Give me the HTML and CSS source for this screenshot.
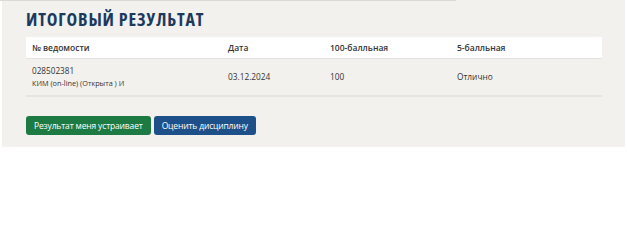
FILE: index.html
```html
<!DOCTYPE html>
<html lang="ru">
<head>
<meta charset="utf-8">
<link rel="stylesheet" href="styles.css">
</head>
<body>
<div class="topline"></div>
<section class="panel">
  <h2 class="title">ИТОГОВЫЙ РЕЗУЛЬТАТ</h2>
  <table class="results">
    <thead>
      <tr>
        <th class="c1">№ ведомости</th>
        <th class="c2">Дата</th>
        <th class="c3">100-балльная</th>
        <th class="c4">5-балльная</th>
      </tr>
    </thead>
    <tbody>
      <tr>
        <td class="c1"><div class="num">028502381</div><div class="sub">КИМ (on-line) (Открыта ) И</div></td>
        <td class="c2">03.12.2024</td>
        <td class="c3">100</td>
        <td class="c4">Отлично</td>
      </tr>
    </tbody>
  </table>
  <div class="actions">
    <button class="btn btn-green">Результат меня устраивает</button>
    <button class="btn btn-blue">Оценить дисциплину</button>
  </div>
</section>
</body>
</html>
```
FILE: styles.css
```css
html, body { margin: 0; padding: 0; background: #fff; }
body { font-family: "Open Sans", "Noto Sans", sans-serif; color: #333; position: relative; }
.topline { position: absolute; left: 0; top: 0; width: 456px; height: 1px; background: #dcdad6; }
.panel {
  margin-left: 2px;
  width: 623px;
  height: 147px;
  box-sizing: border-box;
  background: #f2f1ed;
  padding: 8px 23px 0 24px;
}
.title {
  margin: 0 0 7px 0;
  font-family: "Open Sans", sans-serif;
  font-weight: 700;
  font-stretch: 75%;
  font-size: 18px;
  line-height: 22px;
  letter-spacing: 0.85px;
  color: #1c3a5e;
}
.results { width: 576px; border-collapse: collapse; font-size: 8.3px; }
.results th {
  background: #fff;
  text-align: left;
  font-weight: 600;
  font-size: 8.5px;
  height: 21px;
  padding: 0 6px;
  border-bottom: 1px solid #e4e2de;
  color: #333;
  box-sizing: border-box;
}
.results td {
  text-align: left;
  padding: 5px 6px 6px;
  border-bottom: 2px solid #e7e5e1;
  vertical-align: middle;
}
.c1 { width: 184px; }
.c2 { width: 90px; }
.c3 { width: 115px; }
.num { font-size: 8.2px; line-height: 13px; }
.sub { font-size: 7.3px; line-height: 12px; }
.actions { display: flex; gap: 3px; margin-top: 19px; }
.btn {
  border: 0;
  border-radius: 3px;
  color: #fff;
  font-family: "Open Sans", sans-serif;
  font-size: 8.5px;
  letter-spacing: -0.15px;
  height: 19px;
  padding: 0 8px;
  white-space: nowrap;
  cursor: pointer;
}
.btn-green { background: #1d7a43; }
.btn-blue { background: #1d5088; }
```
